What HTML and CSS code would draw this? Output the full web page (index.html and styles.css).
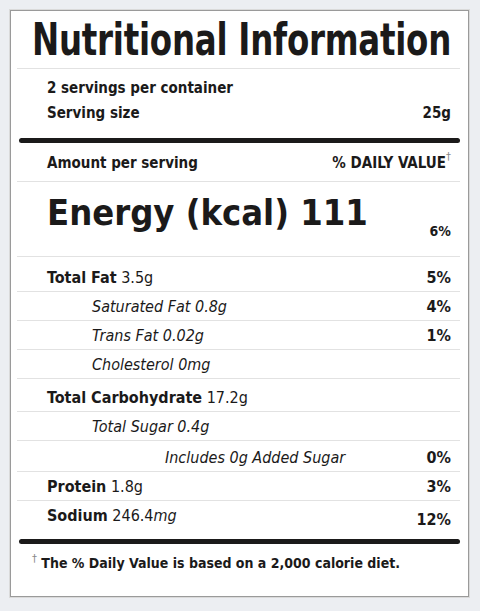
FILE: index.html
```html
<!DOCTYPE html>
<html>
<head>
<meta charset="utf-8">
<link rel="stylesheet" href="styles.css">
</head>
<body>
<div class="label">
  <h1 class="title"><span class="title-text">Nutritional Information</span></h1>
  <div class="servings">
    <div class="srow">2 servings per container</div>
    <div class="srow split"><span>Serving size</span><span>25g</span></div>
  </div>
  <div class="bar"></div>
  <div class="row head"><span>Amount per serving</span><span>% DAILY VALUE<sup class="dag">†</sup></span></div>
  <div class="row energy"><span class="big">Energy (kcal) 111</span><span class="pct small">6%</span></div>
  <div class="row r35"><span><b>Total Fat</b> 3.5g</span><span class="pct">5%</span></div>
  <div class="row sub"><span><i>Saturated Fat 0.8g</i></span><span class="pct">4%</span></div>
  <div class="row sub"><span><i>Trans Fat 0.02g</i></span><span class="pct">1%</span></div>
  <div class="row sub"><span><i>Cholesterol 0mg</i></span><span class="pct"></span></div>
  <div class="row r33"><span><b>Total Carbohydrate</b> 17.2g</span><span class="pct"></span></div>
  <div class="row sub"><span><i>Total Sugar 0.4g</i></span><span class="pct"></span></div>
  <div class="row sub2"><span><i>Includes 0g Added Sugar</i></span><span class="pct">0%</span></div>
  <div class="row"><span><b>Protein</b> 1.8g</span><span class="pct">3%</span></div>
  <div class="row last"><span><b>Sodium</b> 246.4<i>mg</i></span><span class="pct low">12%</span></div>
  <div class="bar"></div>
  <p class="foot"><sup class="dag">†</sup> The % Daily Value is based on a 2,000 calorie diet.</p>
</div>
</body>
</html>
```
FILE: styles.css
```css
html, body {
  margin: 0;
  padding: 0;
}
body {
  background: #eceef2;
  width: 480px;
  height: 611px;
  overflow: hidden;
  padding-top: 10px;
  box-sizing: border-box;
}
.label {
  margin: 0 0 0 10px;
  width: 459px;
  height: 587px;
  box-sizing: border-box;
  background: #fff;
  border: 1px solid #9a9a9a;
  box-shadow: 0 0 0 1px #dadada;
  padding: 0 8px 0 6px;
  color: #1b1a1a;
  font-family: "Liberation Sans Narrow", "DejaVu Sans Condensed", sans-serif;
  font-weight: bold;
}
.title {
  margin: 0;
  height: 58px;
  box-sizing: border-box;
  border-bottom: 1px solid #e2e2e2;
  padding-left: 6px;
  font-size: 44px;
  line-height: 58px;
  text-align: center;
  white-space: nowrap;
  font-weight: bold;
  overflow: visible;
}
.title-text {
  display: inline-block;
  transform: scaleX(0.82);
  transform-origin: center;
  margin: 0 -60px;
  letter-spacing: -0.3px;
}
.servings {
  padding: 7px 9px 0 30px;
  height: 69px;
  box-sizing: border-box;
  font-size: 15px;
}
.srow {
  height: 25px;
  line-height: 24px;
}
.split {
  display: flex;
  justify-content: space-between;
}
.bar {
  height: 5px;
  border-radius: 3px;
  background: #1b1a1a;
  margin-left: 2px;
}
.row {
  display: flex;
  justify-content: space-between;
  align-items: flex-end;
  padding: 0 9px 4px 30px;
  height: 29px;
  box-sizing: border-box;
  border-bottom: 1px solid #e2e2e2;
  font-size: 16px;
  font-weight: normal;
}
.row b {
  font-weight: bold;
}
.row .pct {
  font-weight: bold;
}
.head {
  height: 39px;
  font-size: 15px;
  font-weight: bold;
  padding-bottom: 9px;
}
.head span {
  font-weight: bold;
}
.dag {
  font-size: 11px;
  font-weight: normal;
  color: #888;
  vertical-align: 8px;
  line-height: 0;
}
.energy {
  height: 75px;
  padding-bottom: 25px;
}
.big {
  font-size: 36px;
  font-weight: bold;
  line-height: 1;
}
.pct.small {
  font-size: 14px;
  margin-bottom: -8px;
}
.r35 {
  height: 35px;
}
.r33 {
  height: 33px;
}
.sub {
  padding-left: 75px;
}
.sub2 {
  padding-left: 148px;
  height: 31px;
}
.last {
  height: 38px;
  padding-bottom: 14px;
  border-bottom: none;
}
.pct.low {
  margin-bottom: -4px;
}
.foot {
  margin: 0;
  padding: 11px 0 0 15px;
  font-size: 14px;
  font-weight: bold;
}
.foot .dag {
  vertical-align: 6px;
}
```
